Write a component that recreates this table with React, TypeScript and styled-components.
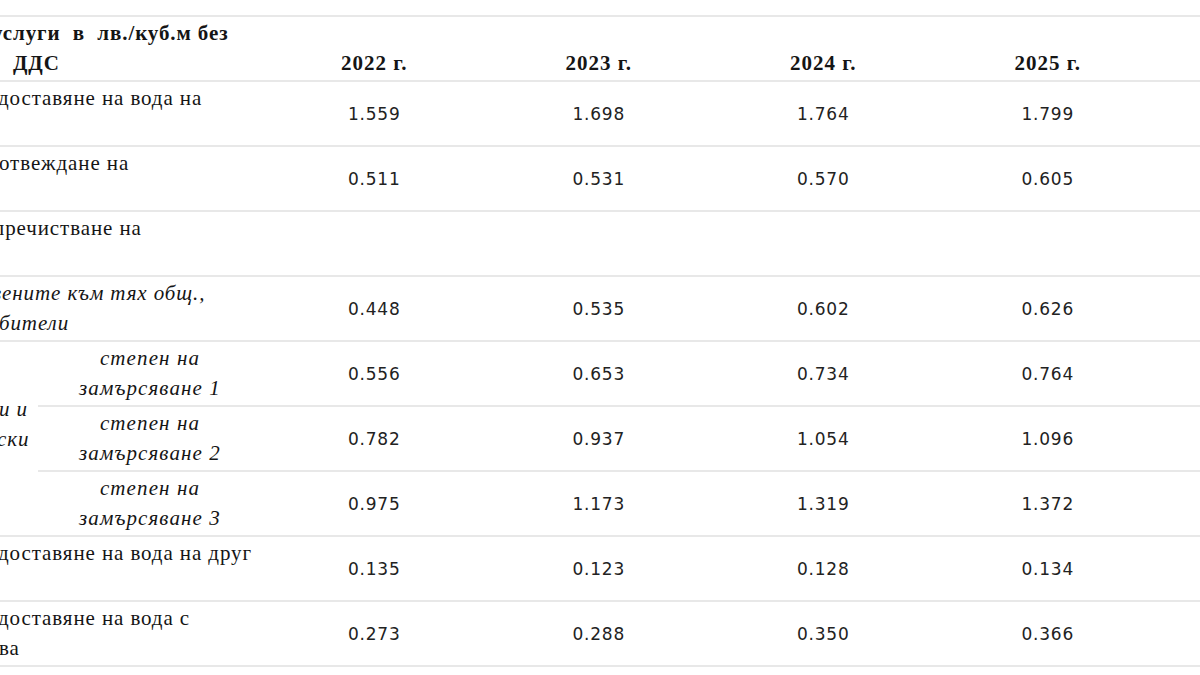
import React from "react";
import styled, { createGlobalStyle } from "styled-components";

const Global = createGlobalStyle`
  html, body { margin: 0; padding: 0; background: #ffffff; }
  body { width: 1200px; height: 675px; overflow: hidden; }
`;

const LINE = "#e8e8e8";

const Page = styled.div`
  width: 1200px;
  height: 675px;
  padding-top: 15px;
  box-sizing: border-box;
  overflow: hidden;
  background: #ffffff;
  color: #151515;
`;

const Table = styled.div`
  display: grid;
  grid-template-columns: 38px 224px repeat(4, 224.5px) 1fr;
  grid-auto-rows: 65px;
  border-top: 2px solid ${LINE};
`;

const Cell = styled.div<{ $span?: number; $rows?: number }>`
  box-sizing: border-box;
  border-bottom: 2px solid ${LINE};
  grid-column: span ${(p) => p.$span ?? 1};
  grid-row: span ${(p) => p.$rows ?? 1};
  min-width: 0;
  overflow: hidden;
`;

const LabelCell = styled(Cell)<{ $italic?: boolean; $bold?: boolean }>`
  display: flex;
  flex-direction: column;
  justify-content: flex-start;
  padding-top: 1px;
  font-family: "Liberation Serif", "Times New Roman", serif;
  font-size: 21px;
  line-height: 30px;
  letter-spacing: 0.9px;
  font-style: ${(p) => (p.$italic ? "italic" : "normal")};
  font-weight: ${(p) => (p.$bold ? 700 : 400)};
  white-space: pre;
`;

const GroupCell = styled(LabelCell)`
  justify-content: center;
  padding-top: 0;
  padding-bottom: 30px;
`;

const SubCell = styled(Cell)`
  display: flex;
  flex-direction: column;
  align-items: center;
  justify-content: center;
  font-family: "Liberation Serif", "Times New Roman", serif;
  font-style: italic;
  font-size: 21px;
  line-height: 30px;
  letter-spacing: 1.1px;
  padding-bottom: 2px;
  white-space: pre;
`;

const Line = styled.span<{ $shift?: number }>`
  display: block;
  margin-left: ${(p) => p.$shift ?? 0}px;
`;

const YearCell = styled(Cell)`
  display: flex;
  align-items: flex-end;
  justify-content: center;
  padding-bottom: 2px;
  font-family: "Liberation Serif", "Times New Roman", serif;
  font-weight: 700;
  font-size: 21px;
  line-height: 30px;
  letter-spacing: 1px;
`;

const NumCell = styled(Cell)`
  display: flex;
  align-items: center;
  justify-content: center;
  font-family: "DejaVu Sans", Verdana, sans-serif;
  font-size: 17px;
  letter-spacing: 0.8px;
  color: #222222;
`;

type Row = {
  lines: { text: string; shift?: number }[];
  italic?: boolean;
  values: string[];
};

const years = ["2022 г.", "2023 г.", "2024 г.", "2025 г."];

const topRows: Row[] = [
  {
    lines: [{ text: "доставяне на вода на", shift: -2 }],
    values: ["1.559", "1.698", "1.764", "1.799"],
  },
  {
    lines: [{ text: "отвеждане на", shift: -1 }],
    values: ["0.511", "0.531", "0.570", "0.605"],
  },
  {
    lines: [{ text: "пречистване на", shift: -7 }],
    values: ["", "", "", ""],
  },
  {
    lines: [
      { text: "вените към тях общ.,", shift: -8 },
      { text: "бители", shift: -1 },
    ],
    italic: true,
    values: ["0.448", "0.535", "0.602", "0.626"],
  },
];

const pollution: { n: string; values: string[] }[] = [
  { n: "1", values: ["0.556", "0.653", "0.734", "0.764"] },
  { n: "2", values: ["0.782", "0.937", "1.054", "1.096"] },
  { n: "3", values: ["0.975", "1.173", "1.319", "1.372"] },
];

const bottomRows: Row[] = [
  {
    lines: [{ text: "доставяне на вода на друг", shift: -2 }],
    values: ["0.135", "0.123", "0.128", "0.134"],
  },
  {
    lines: [
      { text: "доставяне на вода с", shift: -2 },
      { text: "ва", shift: -1 },
    ],
    values: ["0.273", "0.288", "0.350", "0.366"],
  },
];

function renderRow(r: Row, key: string) {
  return (
    <React.Fragment key={key}>
      <LabelCell $span={2} $italic={r.italic}>
        {r.lines.map((l, i) => (
          <Line key={i} $shift={l.shift}>
            {l.text}
          </Line>
        ))}
      </LabelCell>
      {r.values.map((v, i) => (
        <NumCell key={i}>{v}</NumCell>
      ))}
      <Cell />
    </React.Fragment>
  );
}

export default function App() {
  return (
    <Page>
      <Global />
      <Table>
        <LabelCell $span={2} $bold>
          <Line $shift={-8}>{"услуги  в  лв./куб.м без"}</Line>
          <Line $shift={13}>ДДС</Line>
        </LabelCell>
        {years.map((y) => (
          <YearCell key={y}>{y}</YearCell>
        ))}
        <Cell />

        {topRows.map((r, i) => renderRow(r, "t" + i))}

        <GroupCell $rows={3} $italic>
          <Line $shift={-1}>и и</Line>
          <Line $shift={-3}>ски</Line>
        </GroupCell>
        {pollution.map((p) => (
          <React.Fragment key={p.n}>
            <SubCell>
              <span>степен на</span>
              <span>замърсяване {p.n}</span>
            </SubCell>
            {p.values.map((v, i) => (
              <NumCell key={i}>{v}</NumCell>
            ))}
            <Cell />
          </React.Fragment>
        ))}

        {bottomRows.map((r, i) => renderRow(r, "b" + i))}
      </Table>
    </Page>
  );
}
